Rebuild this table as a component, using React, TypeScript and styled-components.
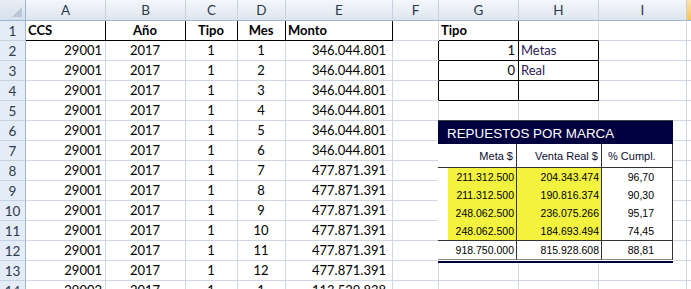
import styled, { createGlobalStyle } from "styled-components";

const GlobalStyle = createGlobalStyle`
  html, body { margin: 0; padding: 0; background: #fff; overflow: hidden; }
`;

type Align = "left" | "center" | "right";

const COLUMNS = ["A", "B", "C", "D", "E", "F", "G", "H", "I", ""];

const months = Array.from({ length: 12 }, (_, i) => ({
  ccs: "29001",
  year: "2017",
  tipo: "1",
  mes: String(i + 1),
  monto: i < 6 ? "346.044.801" : "477.871.391",
}));
const rows = [...months, { ccs: "29002", year: "2017", tipo: "1", mes: "1", monto: "113.529.838" }];

const tipos: Record<number, [string, string]> = { 2: ["1", "Metas"], 3: ["0", "Real"], 4: ["", ""] };

const brand = [
  ["211.312.500", "204.343.474", "96,70"],
  ["211.312.500", "190.816.374", "90,30"],
  ["248.062.500", "236.075.266", "95,17"],
  ["248.062.500", "184.693.494", "74,45"],
];

const App = () => {
  return (
    <>
      <GlobalStyle />
      <Sheet>
        <Grid>
          <Corner>
            <svg width="12" height="12" viewBox="0 0 12 12">
              <polygon points="11,1 11,11 1,11" fill="#b8c6d8" />
            </svg>
          </Corner>
          {COLUMNS.map((c, i) => (
            <ColHead key={i} $hot={c === ""}>{c}</ColHead>
          ))}

          <RowHead>1</RowHead>
          <Cell $bold $edgeR $edgeB>CCS</Cell>
          <Cell $bold $align="center" $edgeR $edgeB>Año</Cell>
          <Cell $bold $align="center" $edgeR $edgeB>Tipo</Cell>
          <Cell $bold $align="center" $edgeR $edgeB>Mes</Cell>
          <Cell $bold $edgeR $edgeB>Monto</Cell>
          <Cell />
          <Cell $bold $edgeR $edgeB>Tipo</Cell>
          <Cell $edgeB />
          <Cell />
          <Cell />

          {rows.map((r, i) => {
            const n = i + 2;
            const t = tipos[n];
            return [
              <RowHead key={`h${n}`}>{n}</RowHead>,
              <Cell key={`a${n}`} $align="right">{r.ccs}</Cell>,
              <Cell key={`b${n}`} $align="center">{r.year}</Cell>,
              <Cell key={`c${n}`} $align="center">{r.tipo}</Cell>,
              <Cell key={`d${n}`} $align="center">{r.mes}</Cell>,
              <Cell key={`e${n}`} $align="right" $padR={6}>{r.monto}</Cell>,
              <Cell key={`f${n}`} $edgeR={!!t} />,
              <Cell key={`g${n}`} $align="right" $edgeR={!!t} $edgeB={!!t}>{t ? t[0] : ""}</Cell>,
              <Cell key={`h2${n}`} $label $edgeR={!!t} $edgeB={!!t}>{t ? t[1] : ""}</Cell>,
              <Cell key={`i${n}`} />,
              <Cell key={`j${n}`} />,
            ];
          })}
        </Grid>

        <Board>
          <BoardTitle>REPUESTOS POR MARCA</BoardTitle>
          <BoardGrid>
            <BoardHead>Meta $</BoardHead>
            <BoardHead>Venta Real $</BoardHead>
            <BoardHead $left>% Cumpl.</BoardHead>
            {brand.map((b, i) => [
              <BoardCell key={`m${i}`} $fill $inset>{b[0]}</BoardCell>,
              <BoardCell key={`v${i}`} $fill>{b[1]}</BoardCell>,
              <BoardCell key={`p${i}`} $pad={18}>{b[2]}</BoardCell>,
            ])}
            <TotalCell>918.750.000</TotalCell>
            <TotalCell>815.928.608</TotalCell>
            <TotalCell $pad={18}>88,81</TotalCell>
          </BoardGrid>
          <BoardFoot />
        </Board>
      </Sheet>
    </>
  );
};
export default App;

const Sheet = styled.div`
  position: relative;
  width: 691px;
  height: 289px;
  overflow: hidden;
  background: #fff;
`;

const Grid = styled.div`
  display: grid;
  grid-template-columns: 26px 80px 80px 52px 48px 107px 46px 80px 80px 88px 1fr;
  grid-template-rows: 21px repeat(14, 20px);
  font-family: Lato, "Open Sans", sans-serif;
  font-size: 13px;
  color: #000;
`;

const Corner = styled.div`
  box-sizing: border-box;
  display: flex;
  align-items: flex-end;
  justify-content: flex-end;
  padding: 0 2px 2px 0;
  background: linear-gradient(#e9eef5, #d6dfec);
  border-right: 1px solid #9eb6ce;
  border-bottom: 1px solid #9eb6ce;
`;

const ColHead = styled.div<{ $hot?: boolean }>`
  box-sizing: border-box;
  display: flex;
  align-items: center;
  justify-content: center;
  background: ${(p) =>
    p.$hot ? "linear-gradient(#fbe3b0, #f6c45f)" : "linear-gradient(#f4f7fb, #dde5ef)"};
  border-right: 1px solid ${(p) => (p.$hot ? "#f0a840" : "#c5d1e0")};
  border-bottom: 1px solid #9eb6ce;
  color: #2e3a4b;
  font-size: 13.5px;
`;

const RowHead = styled.div`
  box-sizing: border-box;
  display: flex;
  align-items: center;
  justify-content: center;
  background: #e4ecf7;
  border-right: 1px solid #9eb6ce;
  border-bottom: 1px solid #c5d2e3;
  color: #2e3a4b;
  font-size: 13.5px;
`;

const Cell = styled.div<{
  $align?: Align;
  $bold?: boolean;
  $edgeR?: boolean;
  $edgeB?: boolean;
  $padR?: number;
  $label?: boolean;
}>`
  box-sizing: border-box;
  display: flex;
  align-items: flex-end;
  justify-content: ${(p) =>
    p.$align === "right" ? "flex-end" : p.$align === "center" ? "center" : "flex-start"};
  padding: 0 ${(p) => p.$padR ?? 3}px 2px 2px;
  border-right: 1px solid ${(p) => (p.$edgeR ? "#000" : "#d0d7e5")};
  border-bottom: 1px solid ${(p) => (p.$edgeB ? "#000" : "#d0d7e5")};
  font-weight: ${(p) => (p.$bold ? 700 : 400)};
  color: ${(p) => (p.$label ? "#2a1a55" : "#000")};
  line-height: 16px;
  white-space: nowrap;
  overflow: hidden;
`;

const Board = styled.div`
  position: absolute;
  left: 438px;
  top: 120px;
  width: 235px;
  background: #fff;
  font-family: "Liberation Sans", Arial, sans-serif;
  font-size: 10.5px;
  color: #000;
`;

const BoardTitle = styled.div`
  box-sizing: border-box;
  height: 24px;
  padding: 4px 0 0 9px;
  background: #00003f;
  border-top: 1px solid #444;
  color: #fff;
  font-size: 13.4px;
  line-height: 18px;
`;

const BoardGrid = styled.div`
  display: grid;
  grid-template-columns: 79px 85px 71px;
  grid-template-rows: 24px repeat(4, 18px) 20px;
`;

const BoardHead = styled.div<{ $left?: boolean }>`
  box-sizing: border-box;
  display: flex;
  align-items: center;
  justify-content: ${(p) => (p.$left ? "flex-start" : "flex-end")};
  padding: 0 ${(p) => (p.$left ? 0 : 3)}px 0 ${(p) => (p.$left ? 6 : 0)}px;
  border-right: 1px solid #333;
  border-bottom: 1px solid #333;
  color: #0c0c30;
  font-size: 11px;
`;

const BoardCell = styled.div<{ $fill?: boolean; $inset?: boolean; $pad?: number }>`
  box-sizing: border-box;
  display: flex;
  align-items: center;
  justify-content: flex-end;
  padding-right: ${(p) => p.$pad ?? 2}px;
  background: ${(p) =>
    p.$fill ? (p.$inset ? "linear-gradient(to right, #fff 10px, #f3f33f 10px)" : "#f3f33f") : "#fff"};
  border-right: 1px solid #333;
`;

const TotalCell = styled.div<{ $pad?: number }>`
  box-sizing: border-box;
  display: flex;
  align-items: center;
  justify-content: flex-end;
  padding-right: ${(p) => p.$pad ?? 2}px;
  border-top: 1px solid #333;
  border-right: 1px solid #333;
  border-bottom: 1px solid #888;
`;

const BoardFoot = styled.div`
  height: 2px;
  margin-top: 1px;
  background: #00003f;
`;
